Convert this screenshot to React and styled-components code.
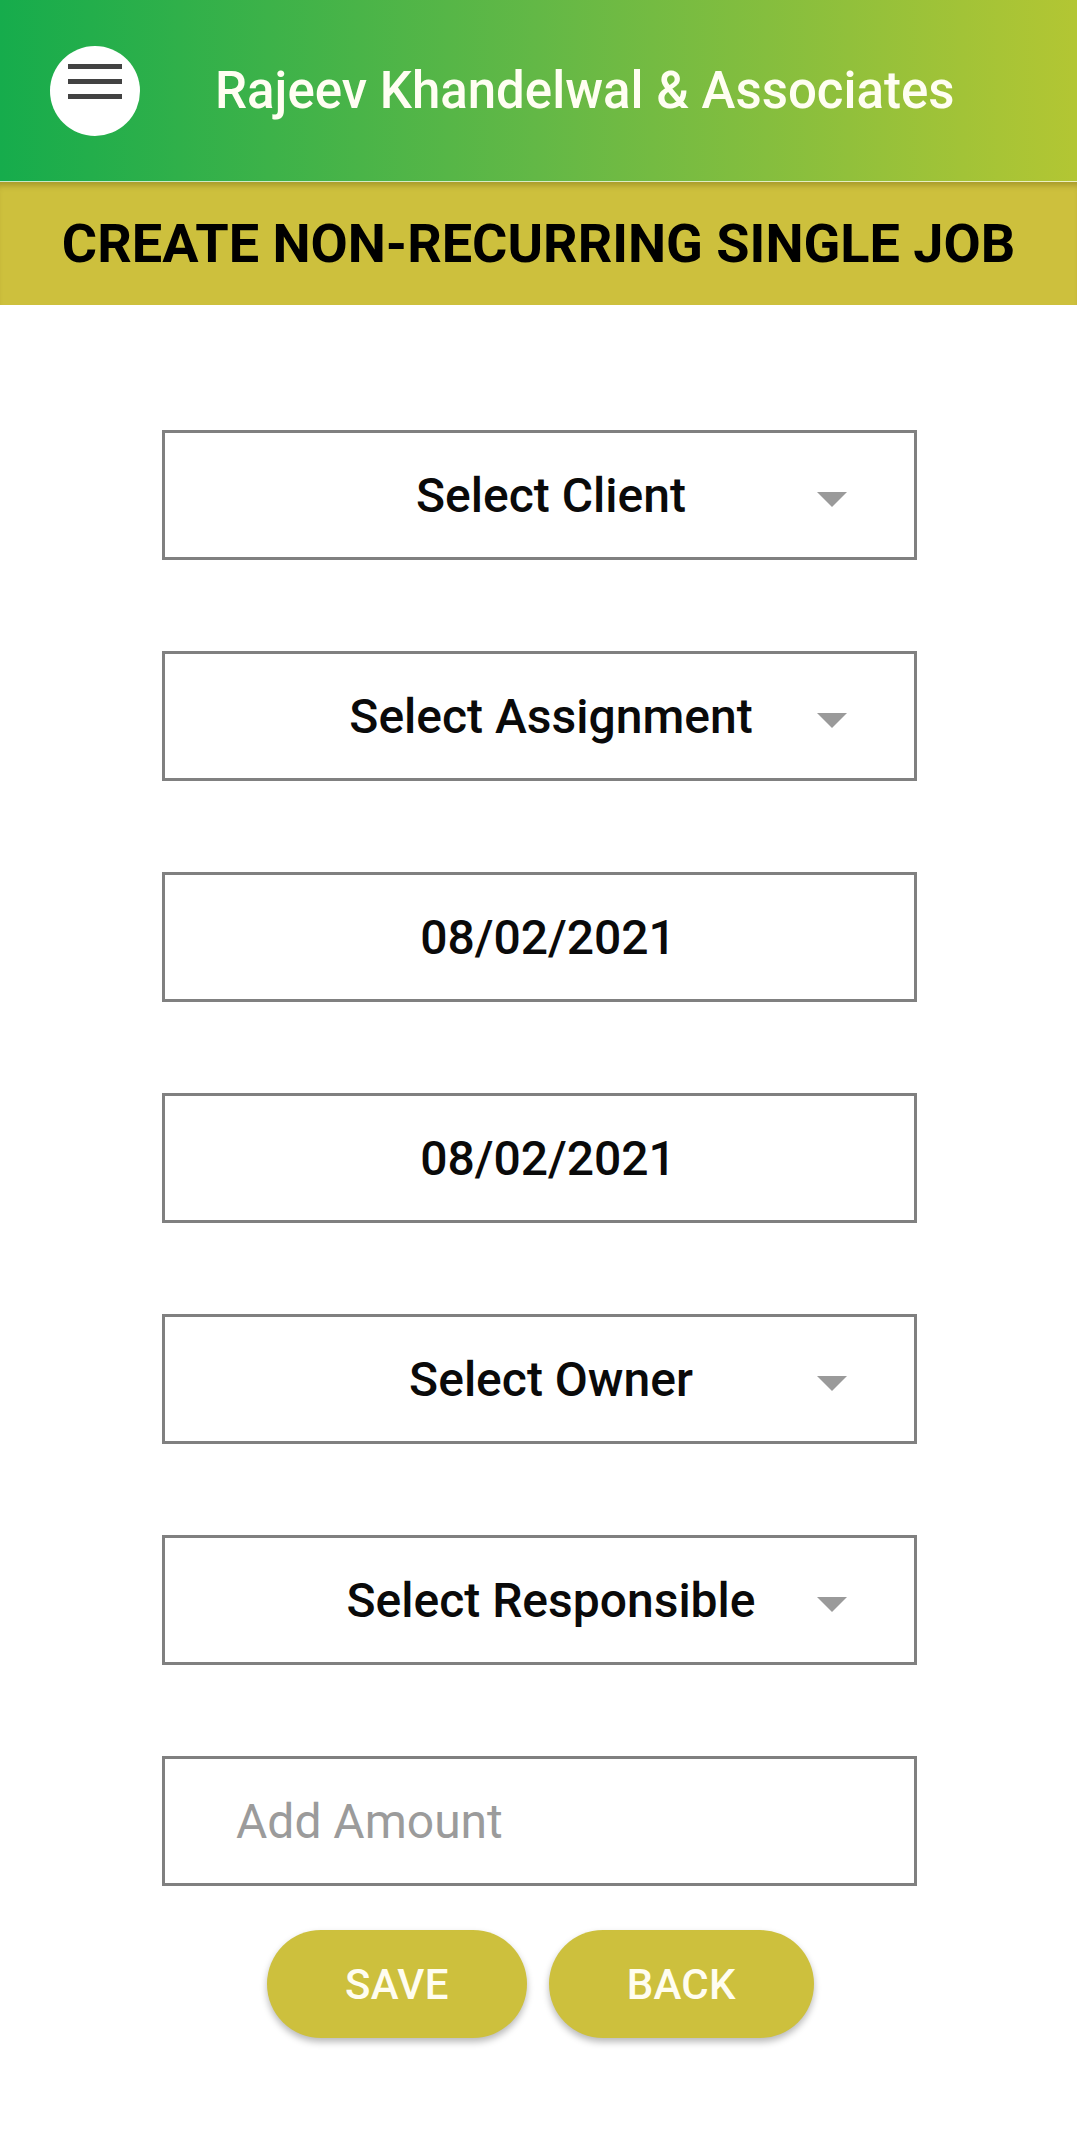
import React from "react";
import styled, { createGlobalStyle } from "styled-components";

const GlobalStyle = createGlobalStyle`
  html, body {
    margin: 0;
    padding: 0;
    background: #ffffff;
  }
  body {
    font-family: Roboto, "Noto Sans", "Liberation Sans", sans-serif;
  }
  * { box-sizing: border-box; }
`;

const Page = styled.div`
  width: 1077px;
  min-height: 2151px;
  background: #ffffff;
  display: flex;
  flex-direction: column;
`;

const AppBar = styled.header`
  height: 182px;
  display: flex;
  align-items: center;
  padding-left: 50px;
  background: linear-gradient(90deg, #16ac4c 0%, #63b846 50%, #b3c633 100%);
  border-bottom: 1px solid rgba(255, 255, 240, 0.75);
`;

const MenuButton = styled.button`
  width: 90px;
  height: 90px;
  border-radius: 50%;
  border: none;
  background: #ffffff;
  padding: 0;
  display: flex;
  align-items: flex-start;
  justify-content: center;
  padding-top: 18px;
  flex-shrink: 0;
`;

const Title = styled.h1`
  margin: 0 0 0 75px;
  font-family: Roboto, sans-serif;
  font-weight: 500;
  font-size: 51px;
  color: #fffef2;
  letter-spacing: 0;
  white-space: nowrap;
`;

const SubHeader = styled.div`
  height: 123px;
  display: flex;
  align-items: center;
  justify-content: center;
  background: #cdc03d;
  box-shadow: inset 0 7px 6px -4px rgba(90, 70, 0, 0.35);
`;

const SubTitle = styled.h2`
  margin: 0;
  font-family: Roboto, sans-serif;
  font-weight: 700;
  font-size: 54px;
  color: #000000;
  white-space: nowrap;
`;

const Form = styled.main`
  display: flex;
  flex-direction: column;
  padding: 125px 0 0 162px;
  gap: 91px;
`;

const Field = styled.div`
  width: 755px;
  height: 130px;
  border: 3px solid #808080;
  background: #ffffff;
  display: flex;
  align-items: center;
  padding-left: ${(p) => p.$padLeft || 0}px;
  padding-right: ${(p) => p.$padRight || 0}px;
`;

const FieldText = styled.span`
  flex: 1;
  text-align: ${(p) => (p.$align === "left" ? "left" : "center")};
  font-family: Roboto, sans-serif;
  font-weight: ${(p) => (p.$placeholder ? 400 : 500)};
  font-size: 48px;
  color: ${(p) => (p.$placeholder ? "#9b9b9b" : "#0a0a0a")};
  white-space: nowrap;
`;

const Arrow = styled.span`
  width: 0;
  height: 0;
  border-left: 15px solid transparent;
  border-right: 15px solid transparent;
  border-top: 15px solid #9a9a9a;
  margin-top: 8px;
  flex-shrink: 0;
`;

const LastGroup = styled.div`
  display: flex;
  flex-direction: column;
  gap: 44px;
`;

const ButtonRow = styled.div`
  width: 755px;
  display: flex;
  justify-content: center;
  gap: 22px;
  padding-left: 2px;
`;

const PillButton = styled.button`
  height: 108px;
  padding: 0 78px;
  border: none;
  border-radius: 54px;
  background: #cdc03d;
  box-shadow: 0 4px 7px rgba(0, 0, 0, 0.28);
  font-family: Roboto, sans-serif;
  font-weight: 500;
  font-size: 42px;
  color: #fffdf0;
  letter-spacing: 0.3px;
`;

const HamburgerIcon = () => (
  <svg width="54" height="36" viewBox="0 0 54 36">
    <rect x="0" y="0" width="54" height="5" fill="#424242" />
    <rect x="0" y="15" width="54" height="5" fill="#424242" />
    <rect x="0" y="30" width="54" height="5" fill="#424242" />
  </svg>
);

const SpinnerField = ({ label }) => (
  <Field $padLeft={120} $padRight={67}>
    <FieldText>{label}</FieldText>
    <Arrow />
  </Field>
);

const DateField = ({ value }) => (
  <Field $padLeft={17}>
    <FieldText>{value}</FieldText>
  </Field>
);

export default function App() {
  return (
    <>
      <GlobalStyle />
      <Page>
        <AppBar>
          <MenuButton aria-label="menu">
            <HamburgerIcon />
          </MenuButton>
          <Title>Rajeev Khandelwal &amp; Associates</Title>
        </AppBar>
        <SubHeader>
          <SubTitle>CREATE NON-RECURRING SINGLE JOB</SubTitle>
        </SubHeader>
        <Form>
          <SpinnerField label="Select Client" />
          <SpinnerField label="Select Assignment" />
          <DateField value="08/02/2021" />
          <DateField value="08/02/2021" />
          <SpinnerField label="Select Owner" />
          <SpinnerField label="Select Responsible" />
          <LastGroup>
            <Field $padLeft={71}>
              <FieldText $placeholder $align="left">Add Amount</FieldText>
            </Field>
            <ButtonRow>
              <PillButton>SAVE</PillButton>
              <PillButton>BACK</PillButton>
            </ButtonRow>
          </LastGroup>
        </Form>
      </Page>
    </>
  );
}
